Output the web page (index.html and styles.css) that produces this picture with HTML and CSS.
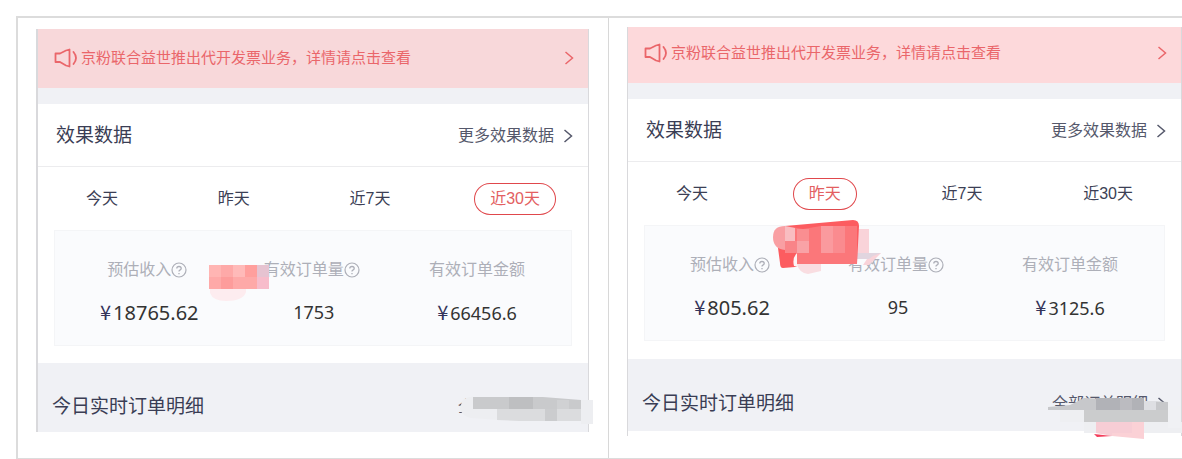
FILE: index.html
```
<!DOCTYPE html>
<html lang="zh-CN">
<head>
<meta charset="utf-8">
<title>效果数据</title>
<link rel="stylesheet" href="styles.css">
</head>
<body>
<svg width="0" height="0" class="defs" aria-hidden="true">
  <symbol id="chevron" viewBox="0 0 10 16"><path d="M1.500 2 8.500 8l-7 6" fill="none" stroke="currentColor" stroke-width="1.500"/></symbol>
  <symbol id="horn" viewBox="0 0 24 20"><path d="M1.500 5.500H6L12 2.500 15.500 1.500V18.500L12 17.500 6 14H1.500ZM19.500 4q5 6 0 12" fill="none" stroke="currentColor" stroke-width="1.800" stroke-linejoin="round" stroke-linecap="round"/></symbol>
  <symbol id="help" viewBox="0 0 16 16"><circle cx="8" cy="8" r="7" fill="none" stroke="currentColor" stroke-width="1.200"/><path d="M5.800 6.500Q5.800 4.500 8 4.500t2.200 1.900Q10.200 7.500 8.900 8.100 8 8.500 8 9.600M8 11v1.300" fill="none" stroke="currentColor" stroke-width="1.300"/></symbol>
</svg>
<main class="frame">
  <div class="cell">
    <section class="phone">
      <a class="notice" href="#"><svg class="horn"><use href="#horn"/></svg><span>京粉联合益世推出代开发票业务，详情请点击查看</span><svg class="chevron"><use href="#chevron"/></svg></a>
      <header class="head"><h2>效果数据</h2><a class="more" href="#">更多效果数据<svg class="chevron"><use href="#chevron"/></svg></a></header>
      <nav class="tabs">
        <button type="button">今天</button><button type="button">昨天</button><button type="button">近7天</button><button type="button" class="active">近30天</button>
      </nav>
      <div class="stats">
        <div class="stat"><span class="label">预估收入<svg class="help"><use href="#help"/></svg></span><span class="value large"><i>¥</i>18765.62</span></div>
        <div class="stat"><span class="label">有效订单量<svg class="help"><use href="#help"/></svg></span><span class="value">1753</span></div>
        <div class="stat"><span class="label">有效订单金额</span><span class="value"><i>¥</i>66456.6</span></div>
        <svg class="mask mask-a" viewBox="0 0 62 38" aria-hidden="true">
          <path d="M1 24h36v3q-3 9-20 9Q4 36 1 28Z" fill="#fdecef"/>
          <path d="M0 0h48v24H0Z" fill="#fea9a8"/>
          <path d="M0 0h12v12H0Z" fill="#ffb5b3"/><path d="M24 0h12v12H24Z" fill="#ffbab9"/>
          <path d="M12 12h12v12H12Z" fill="#fd9c9b"/><path d="M36 0h12v12H36Z" fill="#ff9f9d"/>
          <path d="M48 0h12v12H48Z" fill="#e6c3d1"/><path d="M48 12h12v12H48Z" fill="#f7bccb"/>
        </svg>
      </div>
      <footer class="orders"><h2>今日实时订单明细</h2><a class="more" href="#">全部订单明细<svg class="chevron"><use href="#chevron"/></svg></a>
        <svg class="mask mask-b" viewBox="0 0 134 30" aria-hidden="true">
          <path d="M3 6Q8 1 16 2L122 5h12v24h-12V25H40L12 23Q3 21 1 14Z" fill="#edeef1"/>
          <path d="M14 2h70l38 3v9H14Z" fill="#c9cacc"/><path d="M50 2h24v12H50Z" fill="#bebfc1"/>
          <path d="M38 14h84v12H60l-22-1Z" fill="#dbdcde"/><path d="M86 14h12v12H86Z" fill="#cbccce"/><path d="M98 5h12v9H98Z" fill="#d0d1d3"/>
        </svg>
      </footer>
    </section>
  </div>
  <div class="cell cell-end">
    <section class="phone">
      <a class="notice" href="#"><svg class="horn"><use href="#horn"/></svg><span>京粉联合益世推出代开发票业务，详情请点击查看</span><svg class="chevron"><use href="#chevron"/></svg></a>
      <header class="head"><h2>效果数据</h2><a class="more" href="#">更多效果数据<svg class="chevron"><use href="#chevron"/></svg></a></header>
      <nav class="tabs">
        <button type="button">今天</button><button type="button" class="active">昨天</button><button type="button">近7天</button><button type="button">近30天</button>
      </nav>
      <div class="stats">
        <div class="stat"><span class="label">预估收入<svg class="help"><use href="#help"/></svg></span><span class="value large"><i>¥</i>805.62</span></div>
        <div class="stat"><span class="label">有效订单量<svg class="help"><use href="#help"/></svg></span><span class="value">95</span></div>
        <div class="stat"><span class="label">有效订单金额</span><span class="value"><i>¥</i>3125.6</span></div>
        <svg class="mask mask-c" viewBox="0 0 108 56" aria-hidden="true">
          <path d="M84 9h12v24h12l-12 12H84Z" fill="#f9d3d9"/><path d="M84 33h24l-8 3-4 3H84Z" fill="#e1d5df"/><path d="M84 39h10l-4 6h-6Z" fill="#fafbfd"/>
          <path d="M12 6 80 0q6 0 6 6L84 44H30l-8 3-12 1q-3 0-3-5L5 28Z" fill="#fc5c60"/>
          <path d="M24 33q-5 5-3 13l6 1 1-10Z" fill="#fdf4f5"/>
          <path d="M12 6Q0 6 0 17q0 12 12 13Z" fill="#f99fa3"/>
          <path d="M12 6 30 9 48 6h36v38H24V30H12Z" fill="#fb777a"/>
          <path d="M12 6 22 8v13H12Z" fill="#f9bdc1"/><path d="M12 21h12v12H12Z" fill="#f98488"/>
          <path d="M24 21h12v12H24Z" fill="#f9a2a6"/><path d="M48 6h12v27H48Z" fill="#fa9a9e"/><path d="M60 6h12v27H60Z" fill="#fa8b8f"/>
          <path d="M24 9h12v12H24Z" fill="#fa8e91"/>
          <path d="M24 44h24v7L35 54Q26 53 24 44Z" fill="#f9dde1"/>
        </svg>
      </div>
      <footer class="orders"><h2>今日实时订单明细</h2><a class="more" href="#">全部订单明细<svg class="chevron"><use href="#chevron"/></svg></a>
        <svg class="mask mask-d" viewBox="0 0 134 42" aria-hidden="true">
          <path d="M12 12h24v12H12ZM36 24h98v11H36Z" fill="#eeeff2"/><path d="M120 8h13v22h-13Z" fill="#f0f1f4"/>
          <path d="M0 9 22 7 36 0l84 4v8H0Z" fill="#c7c8cb"/>
          <path d="M48 0h48v12H48Z" fill="#b1b2b7"/><path d="M72 0h12v12H72Z" fill="#bbbbc0"/><path d="M96 3h12v9H96Z" fill="#dedfe3"/>
          <path d="M36 12h84v12H36Z" fill="#cbcccd"/>
          <path d="M48 24h36v14H64L48 35Z" fill="#f7cdd5"/><path d="M84 24h12v17L64 38V35h20Z" fill="#fbd1d6"/>
          <path d="M46 36l18 2-15 1Z" fill="#f33d5b"/>
        </svg>
      </footer>
    </section>
  </div>
</main>
</body>
</html>
```

FILE: styles.css
```
* { box-sizing: border-box; }
body {
  margin: 0;
  background: #fff;
  color: #3c3f55;
  font: 16px/24px "Liberation Sans", "Noto Sans CJK SC", sans-serif;
  overflow-x: hidden;
}
a { color: inherit; text-decoration: none; }
.defs { position: absolute; }
.frame {
  display: grid;
  grid-template-columns: 591fr 573fr;
  margin: 16px 0 0 16px;
  border: solid #dcdcdc;
  border-width: 2px 0 1px 2px;
}
.cell {
  padding: 11px 19px 26px 18px;
  border-right: 1px solid #d8d8d8;
}
.cell-end { padding: 9px 0 22px 18px; border-right: 0; }
.phone {
  border: solid #d9d9dc;
  border-width: 0 1px 0 2px;
  white-space: nowrap;
}
.cell-end .phone { border-left-width: 1px; padding-bottom: 5px; }
.notice {
  display: flex;
  align-items: center;
  height: 59px;
  padding: 0 14px 2px 16px;
  background: #f8d8da;
  color: #ea666a;
  font-size: 15px;
}
.cell-end .notice { height: 56px; padding-bottom: 4px; background: #fdd9db; }
.notice .chevron { margin-left: auto; }
.horn { width: 24px; height: 20px; margin-right: 3px; }
.chevron { width: 10px; height: 16px; flex: none; }
.head {
  display: flex;
  align-items: center;
  justify-content: space-between;
  height: 79px;
  padding: 2px 15px 0 18px;
  border-top: 16px solid #f0f1f5;
  border-bottom: 1px solid #ececee;
}
h2 { margin: 0; font-size: 19px; font-weight: 400; color: #3a3d54; }
.more { display: flex; align-items: center; gap: 9px; color: #55586b; }
.tabs {
  display: flex;
  align-items: center;
  justify-content: space-between;
  height: 63px;
  padding: 0 32px;
}
.tabs button {
  height: 32px;
  padding: 0 16px;
  border: 0;
  border-radius: 16px;
  background: none;
  color: inherit;
  font: inherit;
}
.tabs .active { box-shadow: inset 0 0 0 1px #e0484c; color: #e35f62; }
.stats {
  position: relative;
  display: flex;
  justify-content: space-between;
  margin: 0 16px 17px;
  padding: 27px 46px 20px 45px;
  border: 1px solid #f4f5f7;
  background: #fafbfd;
}
.cell-end .stats { margin-bottom: 18px; }
.stat { display: flex; flex-direction: column; align-items: center; gap: 18px; }
.label { display: flex; align-items: center; color: #adafb8; }
.help { width: 16px; height: 16px; margin-right: 4px; }
.value {
  color: #333;
  font-family: "Noto Sans", "Noto Sans CJK SC", sans-serif;
  font-size: 18px;
}
.value i {
  margin-right: 2px;
  color: #34345a;
  font: 20px/24px "Noto Sans CJK SC", sans-serif;
}
.large { font-size: 20px; }
.orders {
  position: relative;
  display: flex;
  justify-content: space-between;
  padding: 32px 15px 13px 14px;
  background: #f0f1f5;
}
.cell-end .orders { padding: 33px 14px 15px; }
.mask { position: absolute; }
.mask-a { left: 154px; top: 34px; width: 62px; height: 38px; }
.mask-b { right: -5px; top: 32px; width: 134px; height: 30px; }
.mask-c { left: 128px; top: -6px; width: 108px; height: 56px; }
.mask-d { right: -1px; top: 39px; width: 134px; height: 42px; }
```
